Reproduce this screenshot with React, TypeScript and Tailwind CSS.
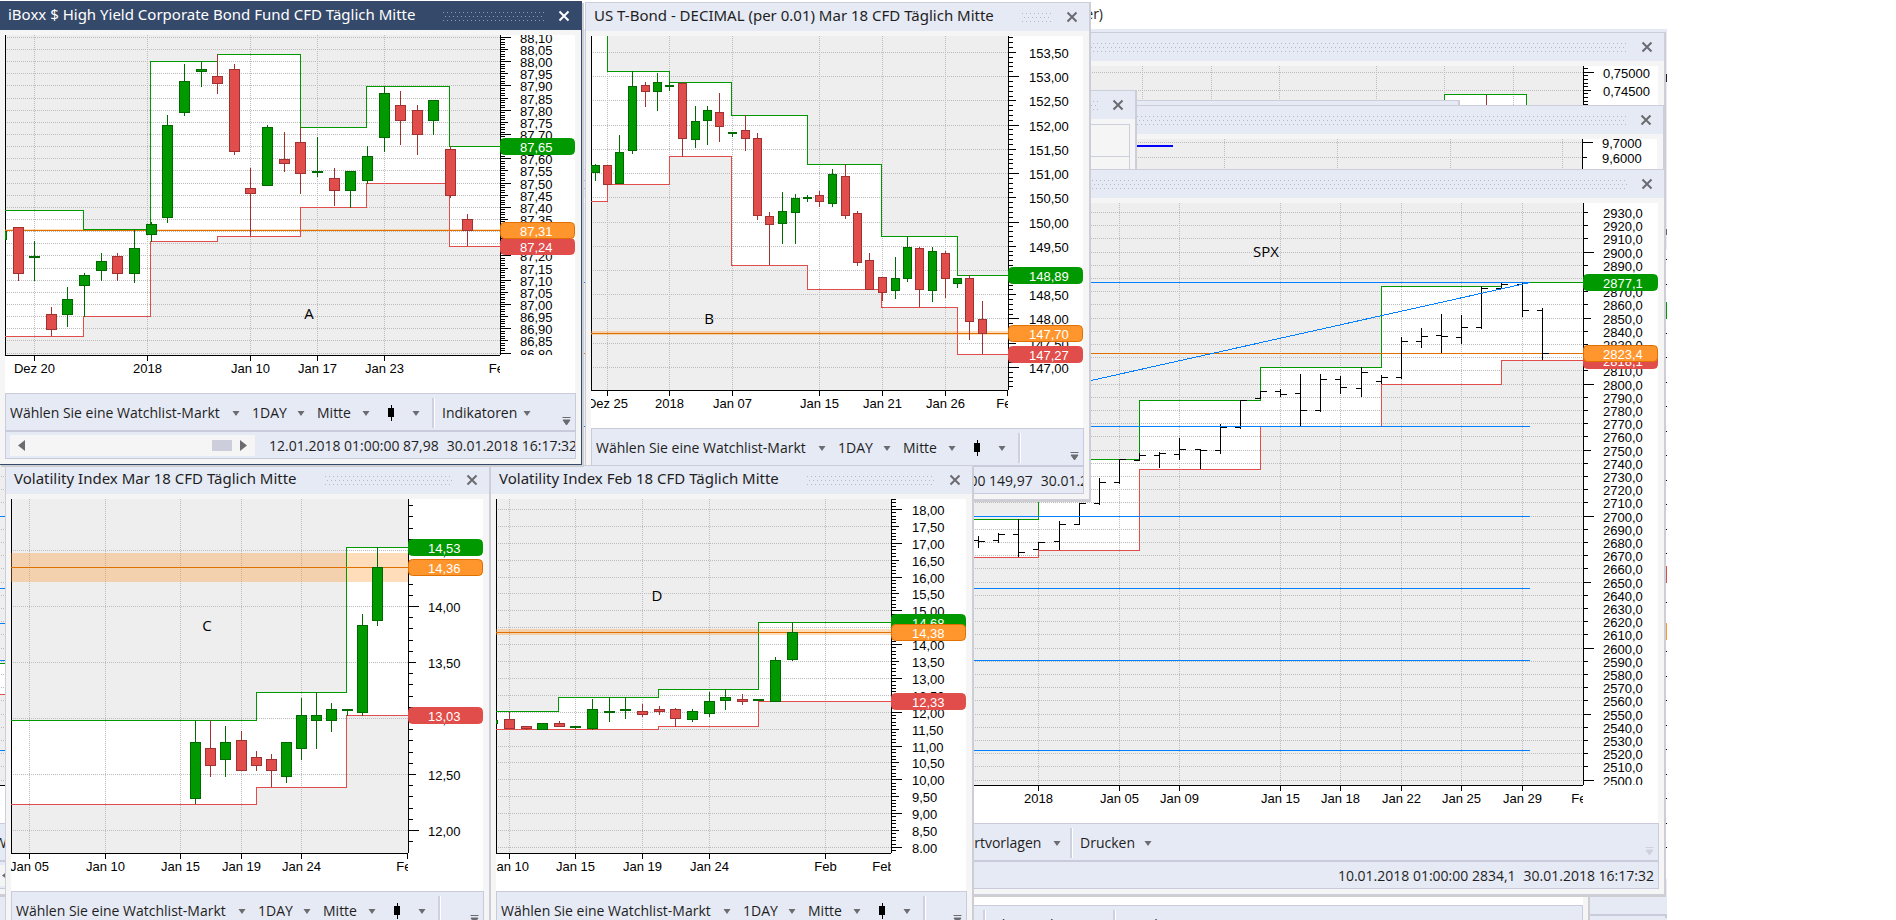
import type { ReactNode } from 'react';
import clsx from 'clsx';

type Step = [xEnd: number, y: number];
type Candle = [kind: 'g' | 'r', x: number, high: number, top: number, bottom: number, low: number];
type Bar = [x: number, high: number, low: number, open: number, close: number];
type Tag = { y: number; text: string; tone: 'green' | 'orange' | 'red' };

interface Scale {
  start: number;
  y: number;
  step: number;
  px: number;
  label: number;
  mid: number;
  major: number;
  decimals: number;
}

interface ChartProps {
  name: string;
  x: number;
  y: number;
  width: number;
  height: number;
  axisX: number;
  axisY: number;
  scale: Scale;
  labelX: number;
  dates?: [number, string][];
  lines?: number[];
  upper?: Step[];
  lower?: Step[];
  candles?: Candle[];
  bars?: Bar[];
  bodyWidth?: number;
  price?: number;
  band?: [number, number];
  tags?: Tag[];
  note?: [number, number, string];
  endTick?: boolean;
  children?: ReactNode;
}

const tones = {
  green: { fill: '#009900', stroke: '#009900' },
  orange: { fill: '#ff962d', stroke: '#e07000' },
  red: { fill: '#e04d4a', stroke: '#e04d4a' },
};

const stepPath = (x0: number, steps: Step[]) =>
  steps.map(([xEnd, y], i) => (i === 0 ? `M${x0} ${y}H${xEnd}` : `V${y}H${xEnd}`)).join('');

const channelPath = (x0: number, upper: Step[], lower: Step[]) => {
  const back = lower.map(([xEnd, y], i) => ({ xEnd, xStart: i === 0 ? x0 : lower[i - 1][0], y })).reverse();
  return `${stepPath(x0, upper)}${back.map((s) => `V${s.y}H${s.xStart}`).join('')}Z`;
};

const Chart = ({
  name, x, y, width, height, axisX, axisY, scale, labelX, dates = [], lines, upper, lower, candles = [],
  bars = [], bodyWidth = 11, price, band, tags = [], note, endTick, children,
}: ChartProps) => {
  const ticks: { i: number; y: number; text: string }[] = [];
  for (let i = -20; i < 220; i++) {
    const ty = Math.floor(scale.y + i * scale.px) + 0.5;
    if (ty < y || ty > axisY - 1) continue;
    ticks.push({ i, y: ty, text: (scale.start - i * scale.step).toFixed(scale.decimals).replace('.', ',') });
  }
  const columns = lines ?? dates.filter(([dx]) => dx < axisX - 12).map(([dx]) => dx);

  return (
    <svg
      role="img"
      aria-label={name}
      viewBox={`${x} ${y} ${width} ${height}`}
      width={width}
      height={height}
      className="shrink-0 bg-white font-['Liberation_Sans',Arial,sans-serif] text-[13px]"
    >
      <svg x={x} y={y} width={axisX - x} height={axisY - y} viewBox={`${x} ${y} ${axisX - x} ${axisY - y}`} shapeRendering="crispEdges">
        <rect x={x} y={y} width={axisX - x} height={axisY - y} fill="#eeeeee" />
        {upper && lower && <path d={channelPath(x, upper, lower)} fill="#fff" />}
        <g stroke="#bcbcbc" strokeDasharray="1 1">
          {ticks.filter((t) => t.i % scale.label === 0).map((t) => (
            <line key={t.i} x1={x} x2={axisX} y1={t.y} y2={t.y} />
          ))}
          {columns.map((cx) => (
            <line key={cx} x1={cx} x2={cx} y1={y} y2={axisY} />
          ))}
        </g>
        <line x1={x + 0.5} x2={x + 0.5} y1={y} y2={axisY} stroke="#000" />
        {band && <rect x={x} y={band[0]} width={axisX - x} height={band[1] - band[0]} fill="#ff962d" fillOpacity={0.32} />}
        {lower && <path d={stepPath(x, lower)} fill="none" stroke="#e04d4a" />}
        {upper && <path d={stepPath(x, upper)} fill="none" stroke="#009900" />}
        {price && <line x1={x} x2={axisX} y1={price} y2={price} stroke="#e07000" />}
        {candles.map(([kind, cx, high, top, bottom, low]) => (
          <g key={cx} stroke={kind === 'g' ? '#006a00' : '#a03232'} fill={kind === 'g' ? '#009900' : '#e04d4a'}>
            <line x1={cx} x2={cx} y1={high} y2={low} />
            <rect
              x={cx - (bodyWidth - 1) / 2}
              y={top + 0.5}
              width={bodyWidth - 1}
              height={Math.max(bottom - top - 1, 1)}
            />
          </g>
        ))}
        {bars.map(([bx, high, low, open, close]) => (
          <path key={bx} d={`M${bx} ${high}V${low}M${bx - 6} ${open + 0.5}H${bx}M${bx} ${close + 0.5}H${bx + 6}`} stroke="#000" fill="none" />
        ))}
        {children}
      </svg>

      {/* price axis */}
      <svg x={axisX} y={y} width={x + width - axisX} height={axisY - y} viewBox={`${axisX} ${y} ${x + width - axisX} ${axisY - y}`}>
        <g stroke="#000" shapeRendering="crispEdges">
          <line x1={axisX + 0.5} x2={axisX + 0.5} y1={y} y2={axisY} />
          {ticks.map((t) => (
            <line
              key={t.i}
              x1={axisX}
              x2={axisX + (t.i % scale.major === 0 ? 11 : t.i % scale.mid === 0 ? 8 : 5)}
              y1={t.y}
              y2={t.y}
            />
          ))}
        </g>
        {ticks.filter((t) => t.i % scale.label === 0).map((t) => (
          <text key={t.i} x={labelX} y={t.y + 5}>{t.text}</text>
        ))}
        {tags.map((t) => (
          <g key={t.text}>
            <rect x={axisX + 0.5} y={t.y - 8} width={x + width - axisX - 1} height={16} rx={4} fill={tones[t.tone].fill} stroke={tones[t.tone].stroke} />
            <text x={labelX} y={t.y + 5} fill="#fff">{t.text}</text>
          </g>
        ))}
      </svg>

      {/* date axis */}
      <svg x={x} y={axisY} width={axisX - x} height={30} viewBox={`${x} ${axisY} ${axisX - x} 30`}>
        <g stroke="#000" shapeRendering="crispEdges">
          <line x1={x} x2={axisX} y1={axisY + 0.5} y2={axisY + 0.5} />
          {columns.map((cx) => (
            <line key={cx} x1={cx} x2={cx} y1={axisY} y2={axisY + 6} />
          ))}
          {endTick && <line x1={axisX - 0.5} x2={axisX - 0.5} y1={axisY} y2={axisY + 6} />}
        </g>
        {dates.map(([dx, text]) => (
          <text key={dx} x={dx} y={axisY + 18} textAnchor="middle">{text}</text>
        ))}
      </svg>
      {note && (
        <text x={note[0]} y={note[1] + 6} textAnchor="middle" className="font-['Open_Sans','Noto_Sans',sans-serif] text-[15px]">
          {note[2]}
        </text>
      )}
    </svg>
  );
};

const Caret = ({ className }: { className?: string }) => (
  <svg width="8" height="5" viewBox="0 0 8 5" className={clsx('shrink-0', className)} aria-hidden="true">
    <path d="M0.5 0H7.5L4 5Z" fill="#6b6b70" />
  </svg>
);

const Grip = ({ active }: { active?: boolean }) => (
  <svg className="h-[9px] min-w-0 flex-1" shapeRendering="crispEdges" aria-hidden="true">
    <g stroke={active ? '#8b9ab3' : '#b4b7c6'} strokeDasharray="1 3">
      <line x1="0" x2="3000" y1="0.5" y2="0.5" />
      <line x1="2" x2="3000" y1="4.5" y2="4.5" />
      <line x1="0" x2="3000" y1="8.5" y2="8.5" />
    </g>
  </svg>
);

const Picker = ({ label, value, className }: { label: string; value: string; className: string }) => (
  <label className={clsx('relative flex shrink-0 items-center', className)}>
    <select aria-label={label} defaultValue={value} className="w-full appearance-none bg-transparent outline-none">
      <option>{value}</option>
    </select>
    <Caret className="pointer-events-none absolute right-0" />
  </label>
);

const MenuButton = ({ children, className }: { children: ReactNode; className: string }) => (
  <button type="button" className={clsx('flex shrink-0 items-center justify-between', className)}>
    {children}
    <Caret />
  </button>
);

const separator = 'border-l-2 border-l-[#cfd1e0] pl-2 h-[30px] shadow-[inset_1px_0_0_#fff]';

const Toolbar = ({ children, faded }: { children?: ReactNode; faded?: boolean }) => (
  <div className="flex h-[38px] shrink-0 items-center gap-3 overflow-hidden border border-[#c9cbdc] bg-[#e6eaf5] pl-1 pr-1 pt-[2px]">
    <Picker label="Watchlist-Markt" value="Wählen Sie eine Watchlist-Markt" className="w-[230px]" />
    <Picker label="Intervall" value="1DAY" className="w-[53px]" />
    <Picker label="Kurs" value="Mitte" className="w-[53px]" />
    <MenuButton className="w-[38px]">
      <svg width="18" height="18" viewBox="0 0 18 18" shapeRendering="crispEdges" aria-label="Kerzen">
        <path d="M9 1H10V4H12V13H10V17H9V13H6V4H9Z" fill="#000" />
      </svg>
    </MenuButton>
    <div className="flex min-w-0 flex-1 items-center overflow-hidden">{children ?? <span className={separator} />}</div>
    <svg width="9" height="9" viewBox="0 0 9 9" className="mt-4 shrink-0" aria-hidden="true">
      <path d="M0.5 0.5H8.5M1 3H8L4.5 8Z" fill={faded ? '#cfd1de' : '#6b6b70'} stroke={faded ? '#cfd1de' : '#6b6b70'} strokeWidth="1" />
    </svg>
  </div>
);

const StatusBar = ({ quote, wide }: { quote: string; wide?: boolean }) => (
  <div className="flex h-[28px] shrink-0 items-center overflow-hidden whitespace-nowrap border border-[#c9cbdc] bg-[#e6eaf5] pl-1">
    <div className="flex h-[21px] w-[245px] shrink-0 items-center bg-[#f5f5f5] px-2">
      <button type="button" aria-label="Zurück">
        <svg width="7" height="11" viewBox="0 0 7 11"><path d="M7 0V11L0 5.5Z" fill="#6b6b70" /></svg>
      </button>
      <div className="ml-auto mr-2 h-[11px] w-[20px] bg-[#cccedb]" />
      <button type="button" aria-label="Vor">
        <svg width="7" height="11" viewBox="0 0 7 11"><path d="M0 0V11L7 5.5Z" fill="#6b6b70" /></svg>
      </button>
    </div>
    <div className={clsx('flex gap-2 pt-[2px]', wide ? 'ml-auto pr-1' : 'pl-[14px]')}>
      <span>{quote}</span>
      <span>30.01.2018 16:17:32</span>
    </div>
  </div>
);

interface PanelProps {
  title?: string;
  active?: boolean;
  className: string;
  children?: ReactNode;
}

const Panel = ({ title, active, className, children }: PanelProps) => (
  <section
    className={clsx(
      'absolute flex flex-col overflow-visible border bg-[#f5f5f5]',
      active ? 'border-[#35496a] shadow-[2px_2px_0_#cdcdd2]' : 'border-[#cccedb] shadow-[1px_1px_0_1px_#cdcdd2] [clip-path:inset(0_-1px_-2px_0)]',
      className,
    )}
  >
    <header
      className={clsx(
        'flex h-[28px] shrink-0 items-center pl-2 pr-[11px]',
        active ? 'bg-[#35496a] text-white' : 'bg-[#e6eaf5]',
      )}
    >
      {title && (
        <h2 className="mr-7 shrink-0 whitespace-nowrap pb-1 font-['Noto_Sans','Open_Sans',sans-serif] text-[15px] leading-5">
          {title}
        </h2>
      )}
      <Grip active={active} />
      <button type="button" aria-label="Schließen" className="ml-[14px] shrink-0">
        <svg width="12" height="12" viewBox="0 0 12 12">
          <path d="M1.5 1.5L10.5 10.5M10.5 1.5L1.5 10.5" stroke={active ? '#fff' : '#6b6b70'} strokeWidth="2" />
        </svg>
      </button>
    </header>
    <div className="flex min-h-0 flex-1 flex-col p-[5px]">{children}</div>
  </section>
);

const iboxx: Candle[] = [
  ['g', 1.5, 231, 231, 240, 240], ['r', 18.5, 227, 227, 274, 281], ['g', 34.5, 241, 256, 258, 281],
  ['r', 51.5, 307, 314, 330, 336], ['g', 67.5, 287, 299, 315, 327], ['g', 84.5, 273, 275, 286, 317],
  ['g', 101.5, 253, 261, 271, 281], ['r', 117.5, 253, 256, 274, 281], ['g', 134.5, 229, 248, 274, 283],
  ['g', 151.5, 222, 224, 235, 242], ['g', 167.5, 115, 125, 218, 223], ['g', 184.5, 64, 81, 113, 116],
  ['g', 201.5, 61, 69, 72, 87], ['r', 217.5, 54, 76, 84, 94], ['r', 234.5, 64, 69, 152, 155],
  ['r', 250.5, 168, 188, 194, 236], ['g', 267.5, 125, 127, 186, 186], ['r', 284.5, 132, 159, 164, 172],
  ['r', 300.5, 127, 142, 174, 194], ['g', 317.5, 137, 171, 173, 177], ['r', 334.5, 168, 178, 191, 206],
  ['g', 350.5, 171, 171, 191, 208], ['g', 367.5, 146, 156, 181, 184], ['g', 384.5, 86, 93, 138, 152],
  ['r', 400.5, 91, 105, 121, 145], ['r', 417.5, 105, 110, 135, 155], ['g', 433.5, 100, 100, 121, 135],
  ['r', 450.5, 146, 149, 196, 198], ['r', 467.5, 214, 219, 231, 246],
];

const tbond: Candle[] = [
  ['g', 595.5, 164, 165, 173, 181], ['r', 607.5, 165, 165, 185, 185], ['g', 619.5, 135, 152, 184, 184],
  ['g', 632.5, 71, 86, 151, 154], ['r', 645.5, 82, 85, 92, 107], ['g', 657.5, 73, 82, 92, 111],
  ['g', 669.5, 82, 85, 87, 91], ['r', 682.5, 82, 83, 139, 157], ['g', 695.5, 106, 121, 140, 148],
  ['g', 707.5, 106, 110, 121, 145], ['r', 719.5, 93, 112, 127, 142], ['g', 732.5, 132, 132, 134, 137],
  ['r', 745.5, 115, 130, 139, 151], ['r', 757.5, 133, 138, 216, 220], ['r', 769.5, 212, 216, 225, 265],
  ['g', 782.5, 192, 211, 224, 244], ['g', 795.5, 194, 198, 213, 244], ['g', 807.5, 195, 197, 199, 202],
  ['r', 819.5, 191, 195, 202, 207], ['g', 832.5, 169, 174, 204, 207], ['r', 845.5, 164, 176, 216, 219],
  ['r', 857.5, 211, 213, 263, 266], ['r', 869.5, 253, 260, 290, 290], ['r', 882.5, 277, 277, 293, 301],
  ['g', 895.5, 257, 278, 291, 299], ['g', 907.5, 236, 247, 279, 282], ['r', 919.5, 247, 248, 290, 307],
  ['g', 932.5, 247, 251, 291, 302], ['r', 945.5, 251, 253, 279, 298], ['g', 957.5, 278, 278, 284, 288],
  ['r', 969.5, 275, 278, 322, 340], ['r', 982.5, 301, 319, 334, 354],
];

const vixMar: Candle[] = [
  ['g', 195.5, 720, 742, 799, 804], ['r', 210.5, 720, 748, 766, 777], ['g', 225.5, 726, 742, 760, 777],
  ['r', 241.5, 731, 740, 771, 771], ['r', 256.5, 751, 757, 766, 771], ['r', 271.5, 754, 759, 771, 787],
  ['g', 286.5, 742, 742, 777, 783], ['g', 301.5, 698, 715, 749, 760], ['g', 316.5, 692, 715, 721, 749],
  ['g', 331.5, 703, 709, 721, 732], ['g', 347.5, 709, 709, 711, 716], ['g', 362.5, 614, 625, 713, 716],
  ['g', 377.5, 547, 567, 621, 626],
];

const vixFeb: Candle[] = [
  ['g', 492.5, 720, 720, 724, 724], ['r', 509.5, 712, 719, 729, 729], ['r', 526.5, 726, 726, 729, 730],
  ['g', 542.5, 723, 723, 730, 730], ['r', 559.5, 721, 723, 727, 727], ['g', 575.5, 726, 726, 728, 729],
  ['g', 592.5, 699, 709, 729, 730], ['g', 609.5, 697, 711, 713, 722], ['g', 625.5, 697, 709, 711, 719],
  ['r', 642.5, 704, 711, 715, 717], ['r', 659.5, 706, 709, 712, 715], ['r', 675.5, 708, 709, 719, 727],
  ['g', 692.5, 709, 711, 720, 722], ['g', 709.5, 692, 701, 714, 717], ['g', 725.5, 689, 697, 701, 710],
  ['r', 742.5, 694, 699, 702, 705], ['g', 758.5, 699, 699, 701, 701], ['g', 775.5, 657, 660, 702, 702],
  ['g', 792.5, 622, 632, 660, 661],
];

const spx: Bar[] = [
  [978.5, 536, 548, 540, 541], [998.5, 533, 543, 540, 534], [1018.5, 519, 557, 534, 552],
  [1038.5, 542, 550, 549, 542], [1059.5, 521, 550, 541, 524], [1079.5, 503, 524, 524, 503],
  [1099.5, 478, 505, 503, 482], [1119.5, 459, 484, 482, 459], [1139.5, 453, 460, 460, 455],
  [1159.5, 452, 468, 455, 453], [1179.5, 438, 460, 454, 449], [1200.5, 449, 469, 449, 450],
  [1220.5, 424, 454, 450, 427], [1240.5, 400, 429, 427, 400], [1260.5, 391, 399, 398, 391],
  [1280.5, 389, 397, 391, 394], [1300.5, 374, 426, 393, 410], [1320.5, 374, 412, 410, 379],
  [1340.5, 376, 394, 379, 387], [1361.5, 367, 397, 388, 372], [1381.5, 375, 384, 381, 377],
  [1401.5, 337, 379, 377, 341], [1421.5, 328, 348, 341, 336], [1441.5, 314, 353, 335, 336],
  [1461.5, 315, 344, 337, 327], [1481.5, 286, 329, 327, 288], [1501.5, 283, 289, 288, 284],
  [1522.5, 282, 317, 284, 310], [1542.5, 308, 360, 310, 353],
];

const spxLevels = [282.5, 426.5, 516.5, 588.5, 660.5, 750.5];

const App = () => (
  <main className="relative h-screen overflow-hidden bg-white font-['Open_Sans','Noto_Sans',sans-serif] text-[14px] leading-5 text-[#1e1e1e]">
    <p className="absolute right-[793px] top-[4px] text-right text-[14px]">(Trader)</p>

    {/* workspace behind the floating windows */}
    <div className="absolute left-0 top-[29px] h-[891px] w-[1667px] bg-[#e6eaf5]">
      <svg width="2" height="891" viewBox="0 29 2 891" className="ml-auto" shapeRendering="crispEdges" aria-hidden="true">
        <rect y="249" width="2" height="630" fill="#fff" />
        <line x1="1.5" x2="1.5" y1="259" y2="850" stroke="#000" strokeDasharray="1 23.5" />
        <rect x="1" y="74" width="1" height="8" fill="#222" />
        <rect x="1" y="229" width="1" height="6" fill="#666" />
        <rect x="1" y="302" width="1" height="17" fill="#009900" />
        <rect x="1" y="566" width="1" height="17" fill="#e04d4a" />
        <rect x="1" y="623" width="1" height="17" fill="#ff962d" />
        <rect y="916" width="2" height="2" fill="#c9cbdc" />
      </svg>
    </div>

    <Panel className="left-[900px] top-[32px] h-[800px] w-[765px]">
      <Chart
        name="Devisenkurs"
        x={906} y={66} width={752} height={357} axisX={1583} axisY={400} labelX={1603}
        scale={{ start: 0.75, y: 72.2, step: 0.001, px: 3.6, label: 5, mid: 5, major: 10, decimals: 5 }}
        lines={[1142.5, 1211.5, 1279.5, 1376.5, 1444.5, 1513.5]}
      >
        <path d="M1444.5 140V94.5H1526.5V140" fill="#fff" stroke="#009900" />
        <path d="M1513.5 96V140" stroke="#bcbcbc" strokeDasharray="1 1" />
        <path d="M1486.5 95V140" stroke="#a03232" />
      </Chart>
    </Panel>
    <Panel className="left-[900px] top-[100px] h-[400px] w-[559px]" />
    <Panel className="left-[900px] top-[105px] h-[400px] w-[764px]">
      <Chart
        name="Indexkurs"
        x={906} y={139} width={751} height={200} axisX={1582} axisY={320} labelX={1602}
        scale={{ start: 9.7, y: 142.3, step: 0.1, px: 15.1, label: 1, mid: 50, major: 50, decimals: 4 }}
        lines={[1224.5, 1337.5, 1450.5, 1562.5]}
      >
        <path d="M906 146H1173" stroke="#0000ff" strokeWidth="2" />
      </Chart>
    </Panel>
    <Panel className="left-[900px] top-[90px] h-[400px] w-[236px]">
      <div className="flex h-full flex-col border border-[#cccedb]">
        <div className="h-[32px] border-b border-[#cccedb]" />
      </div>
    </Panel>

    {/* window sticking out below the SPX chart */}
    <div className="absolute left-0 top-[897px] flex h-[23px] w-[1667px]">
      <div className="w-[974px]" />
      <div className="flex w-[609px] flex-col bg-white pt-[8px]">
        <div className="flex h-[38px] shrink-0 items-center border-r border-t border-[#c9cbdc] bg-[#e6eaf5] pl-[9px]">
          <MenuButton className={clsx(separator, 'w-[130px] pr-3')}>Chartvorlagen</MenuButton>
          <MenuButton className={clsx(separator, 'w-[77px]')}>Drucken</MenuButton>
        </div>
      </div>
      <div className="w-[7px] border-r-2 border-[#cdcdd2] bg-[#f5f5f5]" />
      <div className="h-[19px] flex-1 border-b-2 border-[#c9cbdc]" />
    </div>

    <Panel className="left-[-17px] top-[169px] w-[1682px]">
      <Chart
        name="SPX"
        x={-11} y={203} width={1669} height={620} axisX={1583} axisY={785} labelX={1603}
        scale={{ start: 3000, y: 120.1, step: 10, px: 13.2, label: 1, mid: 5, major: 10, decimals: 1 }}
        dates={[
          [1038.5, '2018'], [1119.5, 'Jan 05'], [1179.5, 'Jan 09'], [1280.5, 'Jan 15'], [1340.5, 'Jan 18'],
          [1401.5, 'Jan 22'], [1461.5, 'Jan 25'], [1522.5, 'Jan 29'], [1582.5, 'Feb'],
        ]}
        upper={[[300, 663.5], [1038.5, 519.5], [1139.5, 459.5], [1260.5, 400.5], [1381.5, 367.5], [1501.5, 286.5], [1583, 282.5]]}
        lower={[[300, 694.5], [1038.5, 557.5], [1139.5, 550.5], [1260.5, 469.5], [1381.5, 426.5], [1501.5, 384.5], [1583, 360.5]]}
        bars={spx}
        price={353.5}
        tags={[
          { y: 282.5, text: '2877,1', tone: 'green' },
          { y: 360.5, text: '2818,1', tone: 'red' },
          { y: 353.5, text: '2823,4', tone: 'orange' },
        ]}
        note={[1266, 251, 'SPX']}
      >
        <g stroke="#0080ff">
          {spxLevels.map((level) => (
            <line key={level} x1={-11} x2={1530} y1={level} y2={level} />
          ))}
          <line x1={-11} x2={1530} y1={626.5} y2={282.5} />
        </g>
      </Chart>
      <Toolbar faded>
        <MenuButton className="ml-[533px] w-[112px]">Chartvorlagen</MenuButton>
        <MenuButton className={clsx(separator, 'ml-[9px] w-[82px]')}>Drucken</MenuButton>
      </Toolbar>
      <StatusBar quote="10.01.2018 01:00:00 2834,1" wide />
    </Panel>

    <Panel title="US T-Bond - DECIMAL (per 0.01) Mar 18 CFD Täglich Mitte" className="left-[585px] top-[2px] w-[505px]">
      <Chart
        name="US T-Bond"
        x={591} y={36} width={492} height={392} axisX={1008} axisY={390} labelX={1029}
        scale={{ start: 154, y: 28.2, step: 0.1, px: 4.846, label: 5, mid: 5, major: 10, decimals: 2 }}
        dates={[
          [607.5, 'Dez 25'], [669.5, '2018'], [732.5, 'Jan 07'], [819.5, 'Jan 15'], [882.5, 'Jan 21'],
          [945.5, 'Jan 26'], [1007.5, 'Feb'],
        ]}
        upper={[[607.5, 30], [669.5, 71.5], [731.5, 82.5], [807.5, 115.5], [881.5, 164.5], [957.5, 236.5], [1008, 275.5]]}
        lower={[[607.5, 201.5], [669.5, 184.5], [731.5, 156.5], [807.5, 265.5], [881.5, 289.5], [957.5, 307.5], [1008, 354.5]]}
        candles={tbond}
        bodyWidth={9}
        price={333.5}
        band={[331, 335]}
        tags={[
          { y: 275.5, text: '148,89', tone: 'green' },
          { y: 354.5, text: '147,27', tone: 'red' },
          { y: 333.5, text: '147,70', tone: 'orange' },
        ]}
        note={[709, 318, 'B']}
        endTick
      />
      <Toolbar />
      <StatusBar quote="10.01.2018 01:00:00 149,97" />
    </Panel>

    <Panel title="Volatility Index Feb 18 CFD Täglich Mitte" className="left-[490px] top-[465px] w-[483px]">
      <Chart
        name="Volatility Index Feb 18"
        x={496} y={499} width={470} height={392} axisX={891} axisY={853} labelX={912}
        scale={{ start: 18, y: 509.4, step: 0.1, px: 3.38, label: 5, mid: 5, major: 10, decimals: 2 }}
        dates={[
          [509.5, 'Jan 10'], [575.5, 'Jan 15'], [642.5, 'Jan 19'], [709.5, 'Jan 24'], [825.5, 'Feb'], [883.5, 'Feb'],
        ]}
        upper={[[558.5, 711.5], [658.5, 697.5], [758.5, 689.5], [891, 622.5]]}
        lower={[[658.5, 729.5], [758.5, 726.5], [891, 701.5]]}
        candles={vixFeb}
        price={632.5}
        band={[629, 635]}
        tags={[
          { y: 622.5, text: '14,68', tone: 'green' },
          { y: 701.5, text: '12,33', tone: 'red' },
          { y: 632.5, text: '14,38', tone: 'orange' },
        ]}
        note={[657, 595, 'D']}
      />
      <Toolbar />
      <StatusBar quote="10.01.2018 01:00:00 12,10" />
    </Panel>

    <Panel title="Volatility Index Mar 18 CFD Täglich Mitte" className="left-[5px] top-[465px] w-[485px]">
      <Chart
        name="Volatility Index Mar 18"
        x={11} y={499} width={472} height={392} axisX={408} axisY={853} labelX={428}
        scale={{ start: 15, y: 494.4, step: 0.1, px: 11.2, label: 5, mid: 5, major: 10, decimals: 2 }}
        dates={[
          [29.5, 'Jan 05'], [105.5, 'Jan 10'], [180.5, 'Jan 15'], [241.5, 'Jan 19'], [301.5, 'Jan 24'], [407.5, 'Feb'],
        ]}
        upper={[[256.5, 720.5], [346.5, 692.5], [408, 547.5]]}
        lower={[[256.5, 804.5], [346.5, 787.5], [408, 715.5]]}
        candles={vixMar}
        price={567.5}
        band={[553, 582]}
        tags={[
          { y: 547.5, text: '14,53', tone: 'green' },
          { y: 715.5, text: '13,03', tone: 'red' },
          { y: 567.5, text: '14,36', tone: 'orange' },
        ]}
        note={[207, 625, 'C']}
        endTick
      />
      <Toolbar />
      <StatusBar quote="10.01.2018 01:00:00 12,80" />
    </Panel>

    <Panel active title="iBoxx $ High Yield Corporate Bond Fund CFD Täglich Mitte" className="left-[-1px] top-[1px] w-[583px]">
      <Chart
        name="iBoxx $ High Yield"
        x={5} y={35} width={570} height={358} axisX={500} axisY={355} labelX={520}
        scale={{ start: 88.1, y: 37.4, step: 0.01, px: 2.428, label: 5, mid: 5, major: 10, decimals: 2 }}
        dates={[[34.5, 'Dez 20'], [147.5, '2018'], [250.5, 'Jan 10'], [317.5, 'Jan 17'], [384.5, 'Jan 23'], [500, 'Feb']]}
        upper={[[83.5, 210.5], [150.5, 229.5], [217.5, 61.5], [300.5, 54.5], [366.5, 127.5], [449.5, 86.5], [500, 146.5]]}
        lower={[[83.5, 336.5], [150.5, 316.5], [217.5, 241.5], [300.5, 236.5], [366.5, 207.5], [449.5, 183.5], [500, 246.5]]}
        candles={iboxx}
        price={230.5}
        band={[229, 231]}
        tags={[
          { y: 146.5, text: '87,65', tone: 'green' },
          { y: 246.5, text: '87,24', tone: 'red' },
          { y: 230.5, text: '87,31', tone: 'orange' },
        ]}
        note={[309, 313, 'A']}
      />
      <Toolbar>
        <MenuButton className={clsx(separator, 'w-[99px]')}>Indikatoren</MenuButton>
      </Toolbar>
      <StatusBar quote="12.01.2018 01:00:00 87,98" />
    </Panel>
  </main>
);

export default App;
